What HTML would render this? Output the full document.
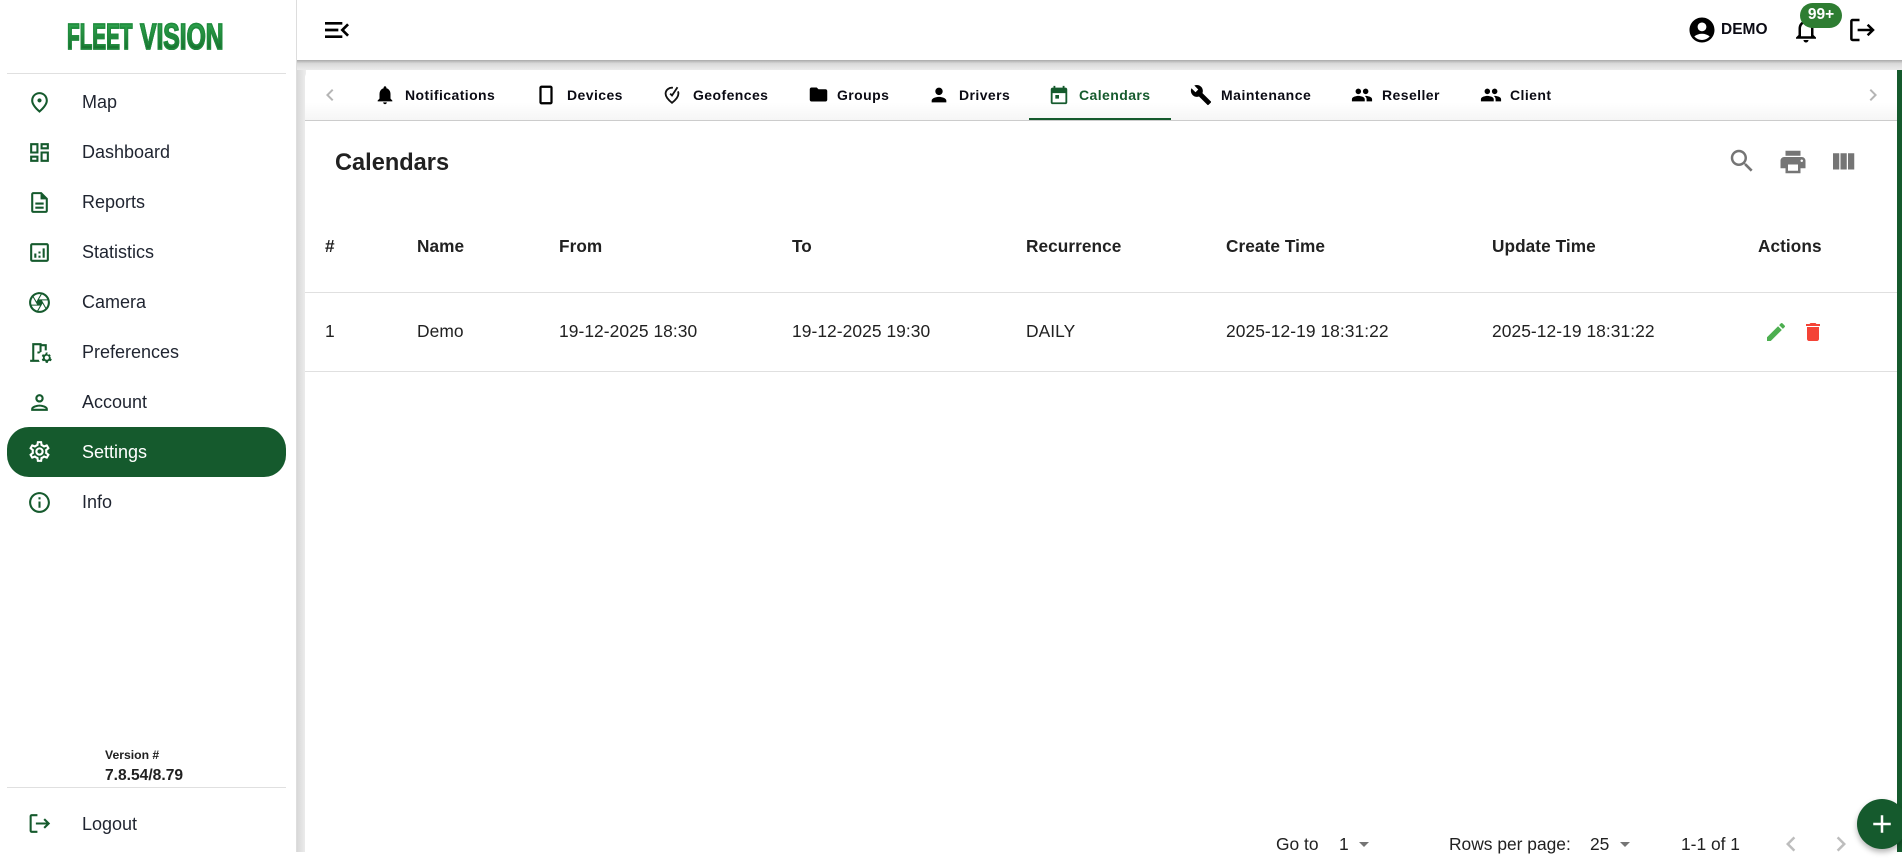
<!DOCTYPE html>
<html lang="en"><head><meta charset="utf-8"><title>Calendars</title>
<style>
*{box-sizing:border-box}
html,body{margin:0;padding:0;width:1902px;height:852px;overflow:hidden;background:#fff;font-family:"Liberation Sans",sans-serif;color:#212121}
.a{position:absolute;white-space:nowrap}
svg.a{display:block}
#side{left:0;top:0;width:297px;height:852px;background:#fff;border-right:1px solid #ddd}
.hr{position:absolute;left:7px;width:279px;height:1px;background:#e0e0e0}
.nav{font-size:18px;line-height:24px;left:82px;color:#1f2430}
.gi{fill:#155a2d}
.logo{position:absolute;top:21px;display:block;font-size:36px;line-height:32px;font-weight:700;transform-origin:0 0;background:linear-gradient(180deg,#2fa64e,#156a2b);-webkit-background-clip:text;background-clip:text;color:transparent;-webkit-text-stroke:1.6px #1f8a3d;white-space:nowrap}
#shadow{left:297px;top:60px;width:9px;height:792px;background:linear-gradient(90deg,#d8d8d8,#eee)}
#top{left:297px;top:0;width:1605px;height:60px;background:#fff}
#topsh{left:297px;top:60px;width:1605px;height:10px;background:linear-gradient(180deg,#a9a9a9,#d9d9d9 35%,#ececec)}
#main{left:305px;top:70px;width:1592px;height:782px;background:#fff;border-top-left-radius:8px}
#tabs{left:305px;top:70px;width:1592px;height:51px;background:linear-gradient(180deg,#fff 65%,#f6f6f6);border-bottom:1px solid #ccc;border-top-left-radius:8px}
.tab{font-size:14px;font-weight:700;line-height:20px;top:85px;color:#0b0b14;letter-spacing:.42px}
.th{font-size:17.2px;font-weight:700;line-height:24px;top:234px;color:#212121;letter-spacing:.08px}
.td{font-size:17.4px;line-height:24px;top:319px;color:#212121;letter-spacing:.06px}
.line{position:absolute;left:305px;width:1592px;height:1px;background:#e0e0e0}
.pg{font-size:17.4px;line-height:24px;top:832px;color:#212121}
</style></head><body>

<div class="a" id="side">
  <span class="logo" style="left:67px;transform:scaleX(.575)">FLEET</span>
  <span class="logo" style="left:140px;transform:scaleX(.685)">VISION</span>
  <div class="hr" style="top:73px"></div>

  <svg class="a gi" style="left:27px;top:90px" width="25" height="25" viewBox="0 0 24 24"><path d="M12 12c-1.1 0-2-.9-2-2s.9-2 2-2 2 .9 2 2-.9 2-2 2zm6-1.8C18 6.57 15.35 4 12 4s-6 2.57-6 6.2c0 2.34 1.95 5.44 6 9.14 4.05-3.7 6-6.8 6-9.14zM12 2c4.2 0 8 3.22 8 8.2 0 3.32-2.67 7.25-8 11.8-5.33-4.55-8-8.48-8-11.8C4 5.22 7.8 2 12 2z"/></svg>
  <div class="a nav" style="top:90px">Map</div>

  <svg class="a gi" style="left:27px;top:140px" width="25" height="25" viewBox="0 0 24 24"><path d="M19 5v2h-4V5h4M9 5v6H5V5h4m10 8v6h-4v-6h4M9 17v2H5v-2h4M21 3h-8v6h8V3zM11 3H3v10h8V3zm10 8h-8v10h8V11zm-10 4H3v6h8v-6z"/></svg>
  <div class="a nav" style="top:140px">Dashboard</div>

  <svg class="a gi" style="left:27px;top:190px" width="25" height="25" viewBox="0 0 24 24"><path d="M8 16h8v2H8zm0-4h8v2H8zm6-10H6c-1.1 0-2 .9-2 2v16c0 1.1.89 2 1.99 2H18c1.1 0 2-.9 2-2V8l-6-6zm4 18H6V4h7v5h5v11z"/></svg>
  <div class="a nav" style="top:190px">Reports</div>

  <svg class="a gi" style="left:27px;top:240px" width="25" height="25" viewBox="0 0 24 24"><path d="M19 3H5c-1.1 0-2 .9-2 2v14c0 1.1.9 2 2 2h14c1.1 0 2-.9 2-2V5c0-1.1-.9-2-2-2zm0 16H5V5h14v14zM7 13h2v4H7zm4 2h2v2h-2zm0-4h2v2h-2zm4-3h2v9h-2z"/></svg>
  <div class="a nav" style="top:240px">Statistics</div>

  <svg class="a gi" style="left:27px;top:290px" width="25" height="25" viewBox="0 0 24 24"><path d="M14.25 2.26l-.08-.04-.01.02C13.46 2.09 12.74 2 12 2 6.48 2 2 6.48 2 12s4.48 10 10 10 10-4.48 10-10c0-4.75-3.31-8.72-7.75-9.74zM19.41 9h-7.99l2.71-4.7c2.4.66 4.35 2.42 5.28 4.7zM13.1 4.08L10.27 9l-1.15 2L6.4 6.3C7.84 4.88 9.82 4 12 4c.37 0 .74.03 1.1.08zM5.7 7.09L8.54 12l1.15 2H4.26C4.1 13.36 4 12.69 4 12c0-1.85.64-3.55 1.7-4.91zM4.59 15h7.98l-2.71 4.7c-2.4-.67-4.34-2.42-5.27-4.7zm6.31 4.91L14.89 13l2.72 4.7C16.16 19.12 14.18 20 12 20c-.38 0-.74-.04-1.1-.09zm7.4-3l-4-6.91h5.43c.17.64.27 1.31.27 2 0 1.85-.64 3.55-1.7 4.91z"/></svg>
  <div class="a nav" style="top:290px">Camera</div>

  <svg class="a gi" style="left:27px;top:340px" width="25" height="25" viewBox="0 0 24 24"><path d="M14 11.26V6h3v4h2V4h-5V3H5v16H3v2h9.26c-.4-.6-.8-1.3-1-2H7V5h5v7.6c.5-.5 1.2-1 2-1.34zM10 11h2v2h-2zm11.69 5.37l1.14-1-1-1.73-1.45.49c-.32-.27-.68-.48-1.08-.63L20 12h-2l-.3 1.49c-.4.15-.76.36-1.08.63l-1.45-.49-1 1.73 1.14 1c-.08.5-.08.76 0 1.26l-1.14 1 1 1.73 1.45-.49c.32.27.68.48 1.08.63L18 22h2l.3-1.49c.4-.15.76-.36 1.08-.63l1.45.49 1-1.73-1.14-1c.08-.51.08-.77 0-1.27zM19 19c-1.1 0-2-.9-2-2s.9-2 2-2 2 .9 2 2-.9 2-2 2z"/></svg>
  <div class="a nav" style="top:340px">Preferences</div>

  <svg class="a gi" style="left:27px;top:390px" width="25" height="25" viewBox="0 0 24 24"><path d="M12 6c1.1 0 2 .9 2 2s-.9 2-2 2-2-.9-2-2 .9-2 2-2m0 10c2.7 0 5.8 1.29 6 2H6c.23-.72 3.31-2 6-2m0-12C9.79 4 8 5.79 8 8s1.79 4 4 4 4-1.79 4-4-1.79-4-4-4zm0 10c-2.67 0-8 1.34-8 4v2h16v-2c0-2.66-5.33-4-8-4z"/></svg>
  <div class="a nav" style="top:390px">Account</div>

  <div class="a" style="left:7px;top:427px;width:279px;height:50px;background:#155a2d;border-radius:22px"></div>
  <svg class="a" style="left:27px;top:439px" width="25" height="25" viewBox="0 0 24 24" fill="#fff"><path d="M19.43 12.98c.04-.32.07-.64.07-.98 0-.34-.03-.66-.07-.98l2.11-1.65c.19-.15.24-.42.12-.64l-2-3.46c-.09-.16-.26-.25-.44-.25-.06 0-.12.01-.17.03l-2.49 1c-.52-.4-1.08-.73-1.69-.98l-.38-2.65C14.46 2.18 14.25 2 14 2h-4c-.25 0-.46.18-.49.42l-.38 2.65c-.61.25-1.17.59-1.69.98l-2.49-1c-.06-.02-.12-.03-.18-.03-.17 0-.34.09-.43.25l-2 3.46c-.13.22-.07.49.12.64l2.11 1.65c-.04.32-.07.65-.07.98 0 .33.03.66.07.98l-2.11 1.65c-.19.15-.24.42-.12.64l2 3.46c.09.16.26.25.44.25.06 0 .12-.01.17-.03l2.49-1c.52.4 1.08.73 1.69.98l.38 2.65c.03.24.24.42.49.42h4c.25 0 .46-.18.49-.42l.38-2.65c.61-.25 1.17-.59 1.69-.98l2.49 1c.06.02.12.03.18.03.17 0 .34-.09.43-.25l2-3.46c.12-.22.07-.49-.12-.64l-2.11-1.65zm-1.98-1.71c.04.31.05.52.05.73 0 .21-.02.43-.05.73l-.14 1.13.89.7 1.08.84-.7 1.21-1.27-.51-1.04-.42-.9.68c-.43.32-.84.56-1.25.73l-1.06.43-.16 1.13-.2 1.35h-1.4l-.19-1.35-.16-1.13-1.06-.43c-.43-.18-.83-.41-1.23-.71l-.91-.7-1.06.43-1.27.51-.7-1.21 1.08-.84.89-.7-.14-1.13c-.03-.31-.05-.54-.05-.74s.02-.43.05-.73l.14-1.13-.89-.7-1.08-.84.7-1.21 1.27.51 1.04.42.9-.68c.43-.32.84-.56 1.25-.73l1.06-.43.16-1.13.2-1.35h1.39l.19 1.35.16 1.13 1.06.43c.43.18.83.41 1.23.71l.91.7 1.06-.43 1.27-.51.7 1.21-1.07.85-.89.7.14 1.13zM12 8c-2.21 0-4 1.79-4 4s1.79 4 4 4 4-1.79 4-4-1.79-4-4-4zm0 6c-1.1 0-2-.9-2-2s.9-2 2-2 2 .9 2 2-.9 2-2 2z"/></svg>
  <div class="a nav" style="top:440px;color:#fff">Settings</div>

  <svg class="a gi" style="left:27px;top:490px" width="25" height="25" viewBox="0 0 24 24"><path d="M11 7h2v2h-2zm0 4h2v6h-2zm1-9C6.48 2 2 6.48 2 12s4.48 10 10 10 10-4.48 10-10S17.52 2 12 2zm0 18c-4.41 0-8-3.59-8-8s3.59-8 8-8 8 3.59 8 8-3.59 8-8 8z"/></svg>
  <div class="a nav" style="top:490px">Info</div>

  <div class="a" style="left:105px;top:747px;font-size:12.2px;font-weight:700;line-height:16px">Version #</div>
  <div class="a" style="left:105px;top:767px;font-size:15.6px;font-weight:700;line-height:18px">7.8.54/8.79</div>
  <div class="hr" style="top:787px"></div>

  <svg class="a" style="left:27px;top:811px" width="25" height="25" viewBox="0 0 24 24" fill="none" stroke="#155a2d" stroke-width="2"><path d="M10 4H4.5a1 1 0 0 0-1 1v14a1 1 0 0 0 1 1H10"/><path d="M8.5 12H21M16.5 7.8l4.3 4.2-4.3 4.2"/></svg>
  <div class="a nav" style="top:812px">Logout</div>
</div>

<div class="a" id="shadow"></div>
<div class="a" id="top"></div>
<div class="a" id="topsh"></div>

<svg class="a" style="left:321px;top:14px" width="32" height="32" viewBox="0 0 24 24"><path d="M3 18h13v-2H3v2zm0-5h10v-2H3v2zm0-7v2h13V6H3zm18 9.59L17.42 12 21 8.41 19.59 7l-5 5 5 5L21 15.59z"/></svg>

<svg class="a" style="left:1687px;top:15px" width="30" height="30" viewBox="0 0 24 24"><path d="M12 2C6.48 2 2 6.48 2 12s4.48 10 10 10 10-4.48 10-10S17.52 2 12 2zm0 4c1.93 0 3.5 1.57 3.5 3.5S13.93 13 12 13s-3.5-1.57-3.5-3.5S10.07 6 12 6zm0 14c-2.03 0-4.43-.82-6.14-2.88C7.55 15.8 9.68 15 12 15s4.45.8 6.14 2.12C16.43 19.18 14.03 20 12 20z"/></svg>
<div class="a" style="left:1721px;top:20px;font-size:15.5px;font-weight:700;line-height:20px;color:#0b0b14">DEMO</div>
<svg class="a" style="left:1791px;top:15px" width="30" height="30" viewBox="0 0 24 24"><path d="M12 22c1.1 0 2-.9 2-2h-4c0 1.1.9 2 2 2zm6-6v-5c0-3.07-1.63-5.64-4.5-6.32V4c0-.83-.67-1.5-1.5-1.5s-1.5.67-1.5 1.5v.68C7.64 5.36 6 7.92 6 11v5l-2 2v1h16v-1l-2-2zm-2 1H8v-6c0-2.48 1.51-4.5 4-4.5s4 2.02 4 4.5v6z"/></svg>
<div class="a" style="left:1800px;top:3px;width:42px;height:25px;border-radius:13px;background:#2e7d32;color:#fff;font-size:15.5px;font-weight:700;line-height:24px;text-align:center">99+</div>
<svg class="a" style="left:1847px;top:15px" width="30" height="30" viewBox="0 0 24 24" fill="none" stroke="#000" stroke-width="2"><path d="M10 4H4.5a1 1 0 0 0-1 1v14a1 1 0 0 0 1 1H10"/><path d="M8.5 12H21M16.5 7.8l4.3 4.2-4.3 4.2"/></svg>

<div class="a" id="main"></div>
<div class="a" style="left:1897px;top:70px;width:5px;height:782px;background:#155a2d"></div>
<div class="a" id="tabs"></div>

<svg class="a" style="left:318px;top:83px" width="24" height="24" viewBox="0 0 24 24" fill="#b5b5b5"><path d="M15.41 7.41L14 6l-6 6 6 6 1.41-1.41L10.83 12z"/></svg>
<svg class="a" style="left:1861px;top:83px" width="24" height="24" viewBox="0 0 24 24" fill="#b5b5b5"><path d="M10 6L8.59 7.41 13.17 12l-4.58 4.59L10 18l6-6z"/></svg>

<svg class="a" style="left:374px;top:84px" width="22" height="22" viewBox="0 0 24 24"><path d="M12 22c1.1 0 2-.9 2-2h-4c0 1.1.89 2 2 2zm6-6v-5c0-3.07-1.64-5.64-4.5-6.32V4c0-.83-.67-1.5-1.5-1.5s-1.5.67-1.5 1.5v.68C7.63 5.36 6 7.92 6 11v5l-2 2v1h16v-1l-2-2z"/></svg>
<div class="a tab" style="left:405px">Notifications</div>
<svg class="a" style="left:535px;top:84px" width="22" height="22" viewBox="0 0 24 24"><path d="M17 2H7c-1.1 0-2 .9-2 2v16c0 1.1.9 2 2 2h10c1.1 0 2-.9 2-2V4c0-1.1-.9-2-2-2zm0 18H7V4h10v16z" stroke="#000" stroke-width=".5"/></svg>
<div class="a tab" style="left:567px">Devices</div>
<svg class="a" style="left:661px;top:84px" width="22" height="22" viewBox="0 0 24 24" fill="none" stroke="#111" stroke-width="2"><path d="M13 4.1C9 3.5 5 6.5 5 10.5c0 3.3 2.5 6.5 7 10 4.5-3.5 7-6.7 7-10 0-1-.2-1.8-.5-2.5"/><path d="M10 10.5l2 2 6-9"/></svg>
<div class="a tab" style="left:693px">Geofences</div>
<svg class="a" style="left:808px;top:84px" width="21" height="21" viewBox="0 0 24 24"><path d="M10 4H4c-1.1 0-1.99.9-1.99 2L2 18c0 1.1.9 2 2 2h16c1.1 0 2-.9 2-2V8c0-1.1-.9-2-2-2h-8l-2-2z"/></svg>
<div class="a tab" style="left:837px">Groups</div>
<svg class="a" style="left:928px;top:84px" width="22" height="22" viewBox="0 0 24 24"><path d="M12 12c2.21 0 4-1.79 4-4s-1.79-4-4-4-4 1.79-4 4 1.79 4 4 4zm0 2c-2.67 0-8 1.34-8 4v2h16v-2c0-2.66-5.33-4-8-4z"/></svg>
<div class="a tab" style="left:959px">Drivers</div>
<svg class="a" style="left:1048px;top:84px" width="22" height="22" viewBox="0 0 24 24" fill="#155a2d"><path d="M19 4h-1V2h-2v2H8V2H6v2H5c-1.11 0-1.99.9-1.99 2L3 20c0 1.1.89 2 2 2h14c1.1 0 2-.9 2-2V6c0-1.1-.9-2-2-2zm0 16H5V10h14v10zM8 12h4v4H8z"/></svg>
<div class="a tab" style="left:1079px;color:#155a2d">Calendars</div>
<svg class="a" style="left:1190px;top:84px" width="22" height="22" viewBox="0 0 24 24"><path d="M22.7 19l-9.1-9.1c.9-2.3.4-5-1.5-6.9-2-2-5-2.4-7.4-1.3L9 6 6 9 1.6 4.7C.4 7.1.9 10.1 2.9 12.1c1.9 1.9 4.6 2.4 6.9 1.5l9.1 9.1c.4.4 1 .4 1.4 0l2.3-2.3c.5-.4.5-1.1.1-1.4z"/></svg>
<div class="a tab" style="left:1221px;letter-spacing:.5px">Maintenance</div>
<svg class="a" style="left:1351px;top:84px" width="22" height="22" viewBox="0 0 24 24"><path d="M16 11c1.66 0 2.99-1.34 2.99-3S17.66 5 16 5c-1.66 0-3 1.34-3 3s1.34 3 3 3zm-8 0c1.66 0 2.99-1.34 2.99-3S9.66 5 8 5C6.34 5 5 6.34 5 8s1.34 3 3 3zm0 2c-2.33 0-7 1.17-7 3.5V19h14v-2.5c0-2.33-4.67-3.5-7-3.5zm8 0c-.29 0-.62.02-.97.05 1.16.84 1.97 1.97 1.97 3.45V19h6v-2.5c0-2.33-4.67-3.5-7-3.5z"/></svg>
<div class="a tab" style="left:1382px">Reseller</div>
<svg class="a" style="left:1480px;top:84px" width="22" height="22" viewBox="0 0 24 24"><path d="M16 11c1.66 0 2.99-1.34 2.99-3S17.66 5 16 5c-1.66 0-3 1.34-3 3s1.34 3 3 3zm-8 0c1.66 0 2.99-1.34 2.99-3S9.66 5 8 5C6.34 5 5 6.34 5 8s1.34 3 3 3zm0 2c-2.33 0-7 1.17-7 3.5V19h14v-2.5c0-2.33-4.67-3.5-7-3.5zm8 0c-.29 0-.62.02-.97.05 1.16.84 1.97 1.97 1.97 3.45V19h6v-2.5c0-2.33-4.67-3.5-7-3.5z"/></svg>
<div class="a tab" style="left:1510px">Client</div>
<div class="a" style="left:1029px;top:118px;width:142px;height:2px;background:#155a2d"></div>

<div class="a" style="left:335px;top:148px;font-size:23.6px;font-weight:700;line-height:30px;color:#212121">Calendars</div>
<svg class="a" style="left:1727px;top:146px" width="30" height="30" viewBox="0 0 24 24" fill="#757575"><path d="M15.5 14h-.79l-.28-.27C15.41 12.59 16 11.11 16 9.5 16 5.91 13.09 3 9.5 3S3 5.91 3 9.5 5.91 16 9.5 16c1.61 0 3.09-.59 4.23-1.57l.27.28v.79l5 4.99L20.49 19l-4.99-5zm-6 0C7.01 14 5 11.99 5 9.5S7.01 5 9.5 5 14 7.01 14 9.5 11.99 14 9.5 14z"/></svg>
<svg class="a" style="left:1778px;top:147px" width="30" height="30" viewBox="0 0 24 24" fill="#757575"><path d="M19 8H5c-1.66 0-3 1.34-3 3v6h4v4h12v-4h4v-6c0-1.66-1.34-3-3-3zm-3 11H8v-5h8v5zm3-7c-.55 0-1-.45-1-1s.45-1 1-1 1 .45 1 1-.45 1-1 1zm-1-9H6v4h12V3z"/></svg>
<svg class="a" style="left:1828px;top:147px" width="30" height="30" viewBox="0 0 24 24" fill="#757575"><path d="M10 18h5V5h-5v13zm-6 0h5V5H4v13zM16 5v13h5V5h-5z"/></svg>

<div class="a th" style="left:325px">#</div>
<div class="a th" style="left:417px">Name</div>
<div class="a th" style="left:559px">From</div>
<div class="a th" style="left:792px">To</div>
<div class="a th" style="left:1026px">Recurrence</div>
<div class="a th" style="left:1226px">Create Time</div>
<div class="a th" style="left:1492px">Update Time</div>
<div class="a th" style="left:1758px">Actions</div>
<div class="line" style="top:292px"></div>

<div class="a td" style="left:325px">1</div>
<div class="a td" style="left:417px">Demo</div>
<div class="a td" style="left:559px">19-12-2025 18:30</div>
<div class="a td" style="left:792px">19-12-2025 19:30</div>
<div class="a td" style="left:1026px">DAILY</div>
<div class="a td" style="left:1226px">2025-12-19 18:31:22</div>
<div class="a td" style="left:1492px">2025-12-19 18:31:22</div>
<svg class="a" style="left:1764px;top:320px" width="24" height="24" viewBox="0 0 24 24" fill="#4caf50"><path d="M3 17.25V21h3.75L17.81 9.94l-3.75-3.75L3 17.25zM20.71 7.04c.39-.39.39-1.02 0-1.41l-2.34-2.34c-.39-.39-1.02-.39-1.41 0l-1.83 1.83 3.75 3.75 1.83-1.83z"/></svg>
<svg class="a" style="left:1801px;top:320px" width="24" height="24" viewBox="0 0 24 24" fill="#f44336"><path d="M6 19c0 1.1.9 2 2 2h8c1.1 0 2-.9 2-2V7H6v12zM19 4h-3.5l-1-1h-5l-1 1H5v2h14V4z"/></svg>
<div class="line" style="top:371px"></div>

<div class="a pg" style="left:1276px">Go to</div>
<div class="a pg" style="left:1339px">1</div>
<svg class="a" style="left:1352px;top:832px" width="24" height="24" viewBox="0 0 24 24" fill="#757575"><path d="M7 10l5 5 5-5z"/></svg>
<div class="a pg" style="left:1449px">Rows per page:</div>
<div class="a pg" style="left:1590px">25</div>
<svg class="a" style="left:1613px;top:832px" width="24" height="24" viewBox="0 0 24 24" fill="#757575"><path d="M7 10l5 5 5-5z"/></svg>
<div class="a pg" style="left:1681px">1-1 of 1</div>
<svg class="a" style="left:1776px;top:829px" width="30" height="30" viewBox="0 0 24 24" fill="#bdbdbd"><path d="M15.41 7.41L14 6l-6 6 6 6 1.41-1.41L10.83 12z"/></svg>
<svg class="a" style="left:1826px;top:829px" width="30" height="30" viewBox="0 0 24 24" fill="#bdbdbd"><path d="M10 6L8.59 7.41 13.17 12l-4.58 4.59L10 18l6-6z"/></svg>

<div class="a" style="left:1857px;top:799px;width:50px;height:50px;border-radius:50%;background:#155a2d;box-shadow:0 3px 6px rgba(0,0,0,.3)"></div>
<svg class="a" style="left:1867px;top:809px" width="30" height="30" viewBox="0 0 24 24" fill="#fff"><path d="M19 13h-6v6h-2v-6H5v-2h6V5h2v6h6v2z"/></svg>

</body></html>
